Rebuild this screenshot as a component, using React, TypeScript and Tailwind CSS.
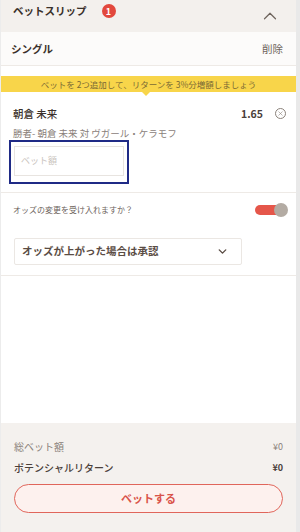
import { ChevronDown, ChevronUp, X } from "lucide-react";

const font = {
  fontFamily: '"Noto Sans CJK JP", "Noto Sans", sans-serif',
};

export default function App() {
  return (
    <div className="flex h-[532px] w-[300px] bg-[#e9e9e9]" style={font}>
      <div className="flex w-[296px] flex-col border-l border-[#ececec] bg-white">
        {/* header */}
        <div className="flex h-[32px] items-start justify-between bg-[#f3f0ed] pl-[12px] pr-[14px] pt-[3px]">
          <div className="flex items-center pt-[1px]">
            <span className="text-[10.5px] font-bold leading-[14px] text-[#3a302a]">ベットスリップ</span>
            <span className="ml-[15px] flex h-[14px] w-[14px] items-center justify-center rounded-full bg-[#e2483d] text-[9px] font-bold leading-none text-white">
              1
            </span>
          </div>
          <ChevronUp className="mt-[2px] h-[22px] w-[24px] text-[#6d635c]" strokeWidth={1.3} />
        </div>

        {/* single row */}
        <div className="flex h-[34px] items-center justify-between border-b border-[#eeeae6] bg-[#fcfbfa] pl-[10px] pr-[13px]">
          <span className="text-[10.5px] font-bold text-[#3a302a]">シングル</span>
          <span className="text-[10.5px] text-[#6d635c]">削除</span>
        </div>

        <div className="h-[10px]" />

        {/* promo banner */}
        <div className="relative flex h-[16px] items-center justify-center bg-[#f8d54a]">
          <span className="text-[8.5px] leading-none text-[#7b6a35]">
            ベットを 2つ追加して、リターンを 3%分増額しましょう
          </span>
          <span className="absolute left-[141px] top-[16px] h-0 w-0 border-x-[4px] border-t-[4px] border-x-transparent border-t-[#f8d54a]" />
        </div>

        {/* selection */}
        <div className="flex flex-col border-b border-[#eeeae6] pb-[8px] pl-[12px] pr-[10px] pt-[14px]">
          <div className="flex items-center justify-between">
            <span className="text-[10.5px] font-medium text-[#3a302a]">朝倉 未来</span>
            <div className="flex items-center gap-[12px]">
              <span className="text-[10.5px] font-bold text-[#4a403a]">1.65</span>
              <span className="flex h-[11px] w-[11px] items-center justify-center rounded-full border border-[#8a817a]">
                <X className="h-[7px] w-[7px] text-[#8a817a]" strokeWidth={2} />
              </span>
            </div>
          </div>
          <div className="mt-[4px] text-[9.5px] leading-[14px] text-[#8a817a]">
            勝者- 朝倉 未来 対 ヴガール・ケラモフ
          </div>
          <div className="-ml-[4px] mt-[0px] w-[120px] border-2 border-[#1f2a86] px-[3px] pb-[6px] pt-[4px]">
            <div className="flex h-[30px] items-center border border-[#e8e4e0] bg-white px-[6px]">
              <span className="text-[9px] text-[#c9c3bd]">ベット額</span>
            </div>
          </div>
        </div>

        {/* odds change */}
        <div className="flex items-center justify-between pl-[12px] pr-[8px] pt-[10px]">
          <span className="text-[8px] text-[#6d635c]">オッズの変更を受け入れますか？</span>
          <div className="relative h-[14px] w-[34px]">
            <div className="absolute left-[1px] top-[2px] h-[10px] w-[26px] rounded-full bg-[#e5564a]" />
            <div className="absolute right-0 top-0 h-[14px] w-[14px] rounded-full bg-[#b3aba3]" />
          </div>
        </div>

        <div className="border-b border-[#eeeae6] pb-[10px] pl-[13px] pt-[21px]">
          <div className="flex h-[27px] w-[228px] items-center justify-between rounded-[2px] border border-[#ebe7e3] bg-white pl-[7px] pr-[12px]">
            <span className="text-[10.5px] font-bold text-[#5a4c44]">オッズが上がった場合は承認</span>
            <ChevronDown className="h-[13px] w-[13px] text-[#5a4c44]" strokeWidth={2.6} />
          </div>
        </div>

        <div className="flex-1" />

        {/* footer */}
        <div className="flex h-[109px] flex-col bg-[#f4f1ee] px-[13px] pt-[16px]">
          <div className="flex items-center justify-between">
            <span className="text-[10px] text-[#8a817a]">総ベット額</span>
            <span className="text-[9px] text-[#8a817a]">¥0</span>
          </div>
          <div className="mt-[6px] flex items-center justify-between">
            <span className="text-[10px] font-medium text-[#4a403a]">ポテンシャルリターン</span>
            <span className="text-[9px] font-bold text-[#4a403a]">¥0</span>
          </div>
          <div className="mt-[9px] flex h-[29px] items-center justify-center rounded-full border-[1.5px] border-[#e0665b] bg-[#fdf1ee]">
            <span className="text-[11px] font-bold text-[#d9534a]">ベットする</span>
          </div>
        </div>
      </div>
    </div>
  );
}
